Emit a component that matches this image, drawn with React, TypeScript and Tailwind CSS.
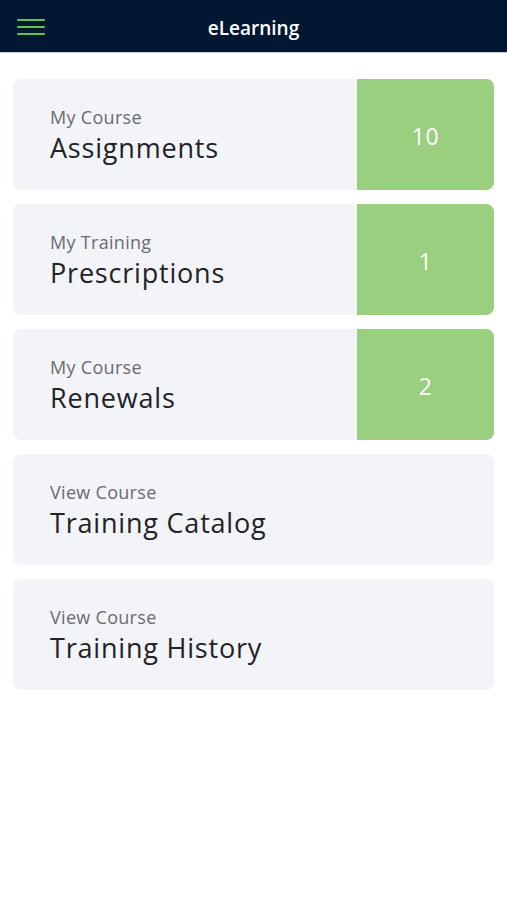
import React from "react";

interface Tile {
  label: string;
  title: string;
  count?: number;
}

const tiles: Tile[] = [
  { label: "My Course", title: "Assignments", count: 10 },
  { label: "My Training", title: "Prescriptions", count: 1 },
  { label: "My Course", title: "Renewals", count: 2 },
  { label: "View Course", title: "Training Catalog" },
  { label: "View Course", title: "Training History" },
];

const App: React.FC = () => {
  return (
    <div className="min-h-[900px] w-[507px] bg-white" style={{ fontFamily: "'Open Sans', Lato, sans-serif" }}>
      <header className="relative flex h-[53px] items-center justify-center border-b border-[#c9cfd8] bg-[#021731]">
        <button className="absolute left-[17px] top-[19px] flex w-[28px] flex-col gap-[5px]">
          <span className="h-[2px] w-full rounded bg-[#6cc04a]"></span>
          <span className="h-[2px] w-full rounded bg-[#6cc04a]"></span>
          <span className="h-[2px] w-full rounded bg-[#6cc04a]"></span>
        </button>
        <h1 className="pt-[4px] text-[19px] font-semibold text-white">eLearning</h1>
      </header>

      <main className="flex flex-col gap-[14px] px-[13px] pt-[26px]">
        {tiles.map((t, i) => (
          <div key={i} className="flex h-[111px] overflow-hidden rounded-[8px] bg-[#f3f4f8]">
            <div className="flex flex-1 flex-col justify-center pl-[37px]">
              <span className="text-[18px] leading-[22px] tracking-[0.3px] text-[#6b6b6f]">{t.label}</span>
              <span className="mt-[4px] text-[27px] leading-[32px] tracking-[0.8px] text-[#222326]">{t.title}</span>
            </div>
            {t.count !== undefined && (
              <div className="flex w-[137px] items-center justify-center bg-[#99cf7e] pt-[4px] text-[23px] tracking-[0.5px] text-white">
                {t.count}
              </div>
            )}
          </div>
        ))}
      </main>
    </div>
  );
};

export default App;
